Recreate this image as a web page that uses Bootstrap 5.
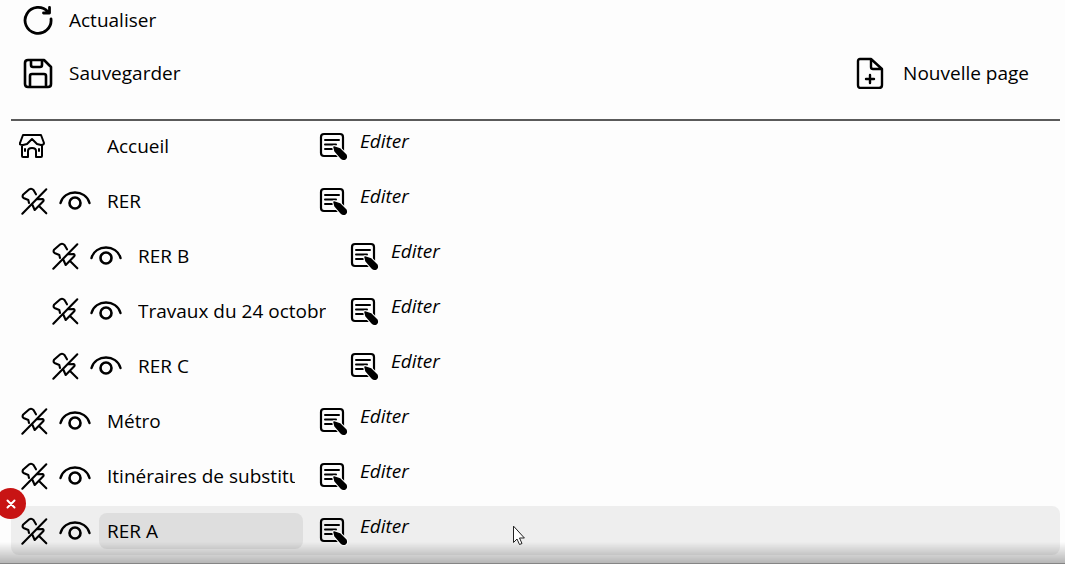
<!DOCTYPE html>
<html lang="fr">
<head>
<meta charset="utf-8">
<meta name="viewport" content="width=device-width, initial-scale=1">
<title>Gestion des pages</title>
<link href="https://cdn.jsdelivr.net/npm/bootstrap@5.3.0/dist/css/bootstrap.min.css" rel="stylesheet">
<style>
  body { font-family: "Open Sans", "Noto Sans", sans-serif; font-size: 19px; line-height: 28px; color: #000; background: #fdfdfd; overflow: hidden; }
  svg { display: block; flex: none; fill: none; stroke: #000; stroke-width: 3; stroke-linecap: round; stroke-linejoin: round; }
  .tool { display: flex; align-items: center; gap: 15px; border: 0; padding: 0; background: none; color: #000; }
  .toolbar { padding: 4px 36px 30px 22px; gap: 21px; }
  .page-list { margin: 0 5px 0 11px; border-top: 2px solid #5a5a5a; }
  .page-row { position: relative; display: flex; align-items: center; height: 49px; margin-bottom: 6px; padding-left: 8px; border-radius: 8px; }
  .page-row.nested { margin-left: 31px; }
  .page-row.selected { background: #eee; }
  .glyph { border: 0; padding: 0; background: none; flex: none; }
  .marks { display: flex; gap: 8px; width: 80px; flex: none; }
  .page-name { width: 204px; height: 36px; padding: 0 8px; border: 0; border-radius: 8px; background: transparent; color: #000; }
  .selected .page-name { background: #dedede; }
  .edit { display: flex; gap: 11px; margin-left: 14px; color: #000; font-style: italic; text-decoration: none; }
  .edit span { line-height: 22px; }
  .remove { position: absolute; left: -16px; top: -18px; width: 31px; height: 31px; border: 0; padding: 0; border-radius: 50%; background: #c81414; }
  .remove svg { margin: auto; stroke: #fff; stroke-width: 2; }
  .bottom-shade { height: 22px; background: linear-gradient(rgba(0,0,0,0), rgba(0,0,0,.28)); border-bottom: 1px solid #858585; pointer-events: none; }
  .pointer { position: absolute; left: 501px; top: 19px; stroke: #222; stroke-width: 1; fill: #fff; stroke-linejoin: miter; }
</style>
</head>
<body>
<svg class="d-none" aria-hidden="true">
  <symbol id="i-pin" viewBox="0 0 32 32">
    <path d="M3.300 28.700 27.300 4.300M17 9.300 14.500 5Q12.500 3 10.300 4.300L4 9.800Q3 12 4.500 13L9.300 15 10 18M18 14.300l5.500-.3q2 1 .5 2.500L15.700 25 13.500 20M20.500 21.500l6.800 6.800" stroke-width="2.100"/>
  </symbol>
  <symbol id="i-eye" viewBox="0 0 32 32">
    <path d="M1.500 18C5 4 27 4 30.500 18" stroke-width="2.400"/><circle cx="16" cy="18" r="5.500" stroke-width="2.600"/>
  </symbol>
  <symbol id="i-edit" viewBox="0 0 32 32">
    <rect x="4" y="4" width="22" height="22" rx="3" stroke-width="2.200"/>
    <path d="M8 10h14M8 14.500h11M8 19h7" stroke-width="2"/>
    <path d="M17 17l1 4 6 7q2 2 4 1t1-4l-6-6-6-2Z" fill="#000" stroke="#fff" stroke-width="3.500"/>
    <path d="M17 17l1 4 6 7q2 2 4 1t1-4l-6-6-6-2Z" fill="#000" stroke-width="1.500"/>
  </symbol>
</svg>

<header class="toolbar d-flex flex-column">
  <button class="tool align-self-start" type="button">
    <svg width="32" height="32" viewBox="0 0 32 32"><path d="M29 15A13 13 0 1 1 26 8M27.500 3.500V9H21.500" stroke-width="2.800"/></svg>
    <span>Actualiser</span>
  </button>
  <div class="d-flex justify-content-between">
    <button class="tool" type="button">
      <svg width="32" height="32" viewBox="0 0 32 32"><path d="M6 3H22L29 10V27Q29 30 26 30H6Q3 30 3 27V6Q3 3 6 3ZM9 3V8Q9 10 11 10H18Q20 10 20 8V3M8 29V19Q8 17 10 17H22Q24 17 24 19V29" stroke-width="2.600"/></svg>
      <span>Sauvegarder</span>
    </button>
    <button class="tool" type="button">
      <svg width="32" height="32" viewBox="0 0 32 32"><path d="M4 2H15L26 12V28Q26 31 23 31H5Q2 31 2 28V4Q2 2 4 2ZM15 3V10Q15 12 17 12H26M14 18V26M10 22H18" stroke-width="2.400"/></svg>
      <span>Nouvelle page</span>
    </button>
  </div>
</header>

<main class="page-list">
  <div class="page-row">
    <div class="marks"><svg width="28" height="28" viewBox="0 0 28 28"><path d="M4 3H22L25 11Q25 13 22 13L18 12 13 7 8 12 4 13Q0 13 1 11ZM3 14V24Q3 25 4 25H9V19Q9 16 13 16T17 19V25H22Q23 25 23 24V14M6 17v2M20 17v2" stroke-width="2"/></svg></div>
    <input class="page-name" aria-label="Nom de la page" value="Accueil">
    <a class="edit" href="#"><svg width="32" height="32"><use href="#i-edit"/></svg><span>Editer</span></a>
  </div>
  <div class="page-row">
    <div class="marks"><button class="glyph" aria-label="Épingler"><svg width="32" height="32"><use href="#i-pin"/></svg></button><button class="glyph" aria-label="Afficher"><svg width="32" height="32"><use href="#i-eye"/></svg></button></div>
    <input class="page-name" aria-label="Nom de la page" value="RER">
    <a class="edit" href="#"><svg width="32" height="32"><use href="#i-edit"/></svg><span>Editer</span></a>
  </div>
  <div class="page-row nested">
    <div class="marks"><button class="glyph" aria-label="Épingler"><svg width="32" height="32"><use href="#i-pin"/></svg></button><button class="glyph" aria-label="Afficher"><svg width="32" height="32"><use href="#i-eye"/></svg></button></div>
    <input class="page-name" aria-label="Nom de la page" value="RER B">
    <a class="edit" href="#"><svg width="32" height="32"><use href="#i-edit"/></svg><span>Editer</span></a>
  </div>
  <div class="page-row nested">
    <div class="marks"><button class="glyph" aria-label="Épingler"><svg width="32" height="32"><use href="#i-pin"/></svg></button><button class="glyph" aria-label="Afficher"><svg width="32" height="32"><use href="#i-eye"/></svg></button></div>
    <input class="page-name" aria-label="Nom de la page" value="Travaux du 24 octobre">
    <a class="edit" href="#"><svg width="32" height="32"><use href="#i-edit"/></svg><span>Editer</span></a>
  </div>
  <div class="page-row nested">
    <div class="marks"><button class="glyph" aria-label="Épingler"><svg width="32" height="32"><use href="#i-pin"/></svg></button><button class="glyph" aria-label="Afficher"><svg width="32" height="32"><use href="#i-eye"/></svg></button></div>
    <input class="page-name" aria-label="Nom de la page" value="RER C">
    <a class="edit" href="#"><svg width="32" height="32"><use href="#i-edit"/></svg><span>Editer</span></a>
  </div>
  <div class="page-row">
    <div class="marks"><button class="glyph" aria-label="Épingler"><svg width="32" height="32"><use href="#i-pin"/></svg></button><button class="glyph" aria-label="Afficher"><svg width="32" height="32"><use href="#i-eye"/></svg></button></div>
    <input class="page-name" aria-label="Nom de la page" value="Métro">
    <a class="edit" href="#"><svg width="32" height="32"><use href="#i-edit"/></svg><span>Editer</span></a>
  </div>
  <div class="page-row">
    <div class="marks"><button class="glyph" aria-label="Épingler"><svg width="32" height="32"><use href="#i-pin"/></svg></button><button class="glyph" aria-label="Afficher"><svg width="32" height="32"><use href="#i-eye"/></svg></button></div>
    <input class="page-name" aria-label="Nom de la page" value="Itinéraires de substitution">
    <a class="edit" href="#"><svg width="32" height="32"><use href="#i-edit"/></svg><span>Editer</span></a>
  </div>
  <div class="page-row selected">
    <button class="remove" type="button" aria-label="Supprimer"><svg width="10" height="10" viewBox="0 0 10 10"><path d="M1.500 1.500l7 7M8.500 1.500l-7 7"/></svg></button>
    <div class="marks"><button class="glyph" aria-label="Épingler"><svg width="32" height="32"><use href="#i-pin"/></svg></button><button class="glyph" aria-label="Afficher"><svg width="32" height="32"><use href="#i-eye"/></svg></button></div>
    <input class="page-name" aria-label="Nom de la page" value="RER A">
    <a class="edit" href="#"><svg width="32" height="32"><use href="#i-edit"/></svg><span>Editer</span></a>
    <svg class="pointer" width="14" height="21" viewBox="0 0 14 21"><path d="M1.500 1.500V17.500L5 14 7.500 19.500 10 18.500 7.500 13H12Z"/></svg>
  </div>
</main>
<div class="bottom-shade fixed-bottom"></div>
<script src="https://cdn.jsdelivr.net/npm/bootstrap@5.3.0/dist/js/bootstrap.bundle.min.js"></script>
</body>
</html>
